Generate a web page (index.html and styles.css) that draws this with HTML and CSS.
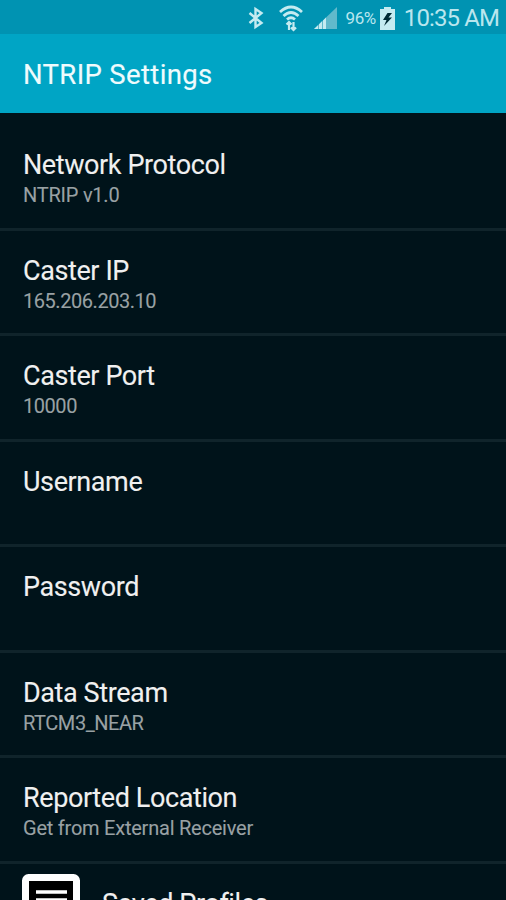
FILE: index.html
```html
<!DOCTYPE html>
<html lang="en">
<head>
<meta charset="utf-8">
<title>NTRIP Settings</title>
<link rel="stylesheet" href="styles.css">
</head>
<body>
<div class="status">
  <svg class="bluetooth" width="18" height="24" viewBox="0 0 18 24"><path d="M2.500 7 14.500 17 8.500 21V3L14.500 7 2.500 17"/></svg>
  <svg class="wifi" width="24" height="27" viewBox="0 0 24 27"><path d="M1 7Q12-3 23 7M4.500 11Q12 4 19.500 11M8 14.500Q12 11 16 14.500"/><path class="arrows" d="M10 25v-8M7.500 19.500 10 17l2.500 2.500M14.500 17v8M12 22.500l2.500 2.500 2.500-2.500"/></svg>
  <svg class="signal" width="23" height="22" viewBox="0 0 23 22"><path class="dim" d="M0 22 23 0V22Z"/><path d="M0 22 4 18.200V22ZM5 17.200 8 14.300V22H5ZM9 13.400 12 10.500V22H9Z"/></svg>
  <span class="percent">96%</span>
  <svg class="battery" width="15" height="23" viewBox="0 0 15 23"><path d="M4 0h7v2h4v21H0V2h4z"/><path class="bolt" d="M7.500 6 3 13h3.500L4 19l8-8.500H8.500L12 6Z"/></svg>
  <span class="clock">10:35 AM</span>
</div>
<header class="header"><h1>NTRIP Settings</h1></header>
<main class="list">
  <section class="row"><h2>Network Protocol</h2><p>NTRIP v1.0</p></section>
  <section class="row"><h2>Caster IP</h2><p class="numeric">165.206.203.10</p></section>
  <section class="row"><h2>Caster Port</h2><p class="numeric">10000</p></section>
  <section class="row"><h2>Username</h2></section>
  <section class="row"><h2>Password</h2></section>
  <section class="row"><h2>Data Stream</h2><p class="numeric">RTCM3_NEAR</p></section>
  <section class="row"><h2>Reported Location</h2><p>Get from External Receiver</p></section>
  <section class="profiles">
    <svg class="doc" width="58" height="58" viewBox="0 0 58 58"><rect x="3.500" y="3.500" width="51" height="51" rx="3"/><path d="M14 18h31M14 26h31M14 34h31"/></svg>
    <h2>Saved Profiles</h2>
  </section>
</main>
</body>
</html>
```
FILE: styles.css
```css
* { box-sizing: border-box; }
body {
  margin: 0;
  height: 900px;
  overflow: hidden;
  background: #00131a;
  color: #f0f0f0;
  font-family: Roboto, "Liberation Sans", sans-serif;
}
h1, h2, p { margin: 0; font-weight: 400; white-space: nowrap; }
.status {
  height: 34px;
  display: flex;
  align-items: center;
  padding: 2px 7px 0 0;
  justify-content: flex-end;
  background: #0093b2;
  color: #b9e6ee;
}
.status svg { flex: none; fill: #c5ebf1; }
.status .bluetooth { fill: none; stroke: #c5ebf1; stroke-width: 2.4; margin-right: 14px; }
.status .wifi { fill: none; stroke: #c5ebf1; stroke-width: 2.8; margin-right: 11px; }
.status .wifi .arrows { stroke-width: 2.2; }
.status .signal { margin-right: 8px; }
.status .signal .dim { fill: #61b9cb; }
.percent { font-size: 17px; letter-spacing: -0.4px; margin-right: 4px; }
.status .battery { margin-right: 9px; }
.status .battery .bolt { fill: #002a34; }
.clock { font-size: 24px; letter-spacing: -0.9px; }
.header {
  height: 79px;
  padding: 24px 23px 0;
  background: #00a5c5;
  color: #effbfd;
}
h1 { font-size: 27.5px; line-height: 34px; letter-spacing: 0.35px; -webkit-text-stroke: 0.15px; }
.list { padding-top: 12px; }
.row {
  height: 105.5px;
  padding: 24px 23px 0;
  border-bottom: 3px solid #10242b;
}
h2 { font-size: 27px; line-height: 32px; letter-spacing: -0.4px; -webkit-text-stroke: 0.1px; }
.row p { font-size: 20px; line-height: 28px; letter-spacing: -0.23px; color: #99a1a4; -webkit-text-stroke: 0.1px; }
.row .numeric { letter-spacing: -0.45px; }
.profiles {
  display: flex;
  padding: 10px 22px 0;
  gap: 22px;
}
.profiles h2 { padding-top: 14px; }
.doc { flex: none; fill: #000; stroke: #fff; stroke-width: 7; }
.doc path { stroke-width: 3.5; }
```
